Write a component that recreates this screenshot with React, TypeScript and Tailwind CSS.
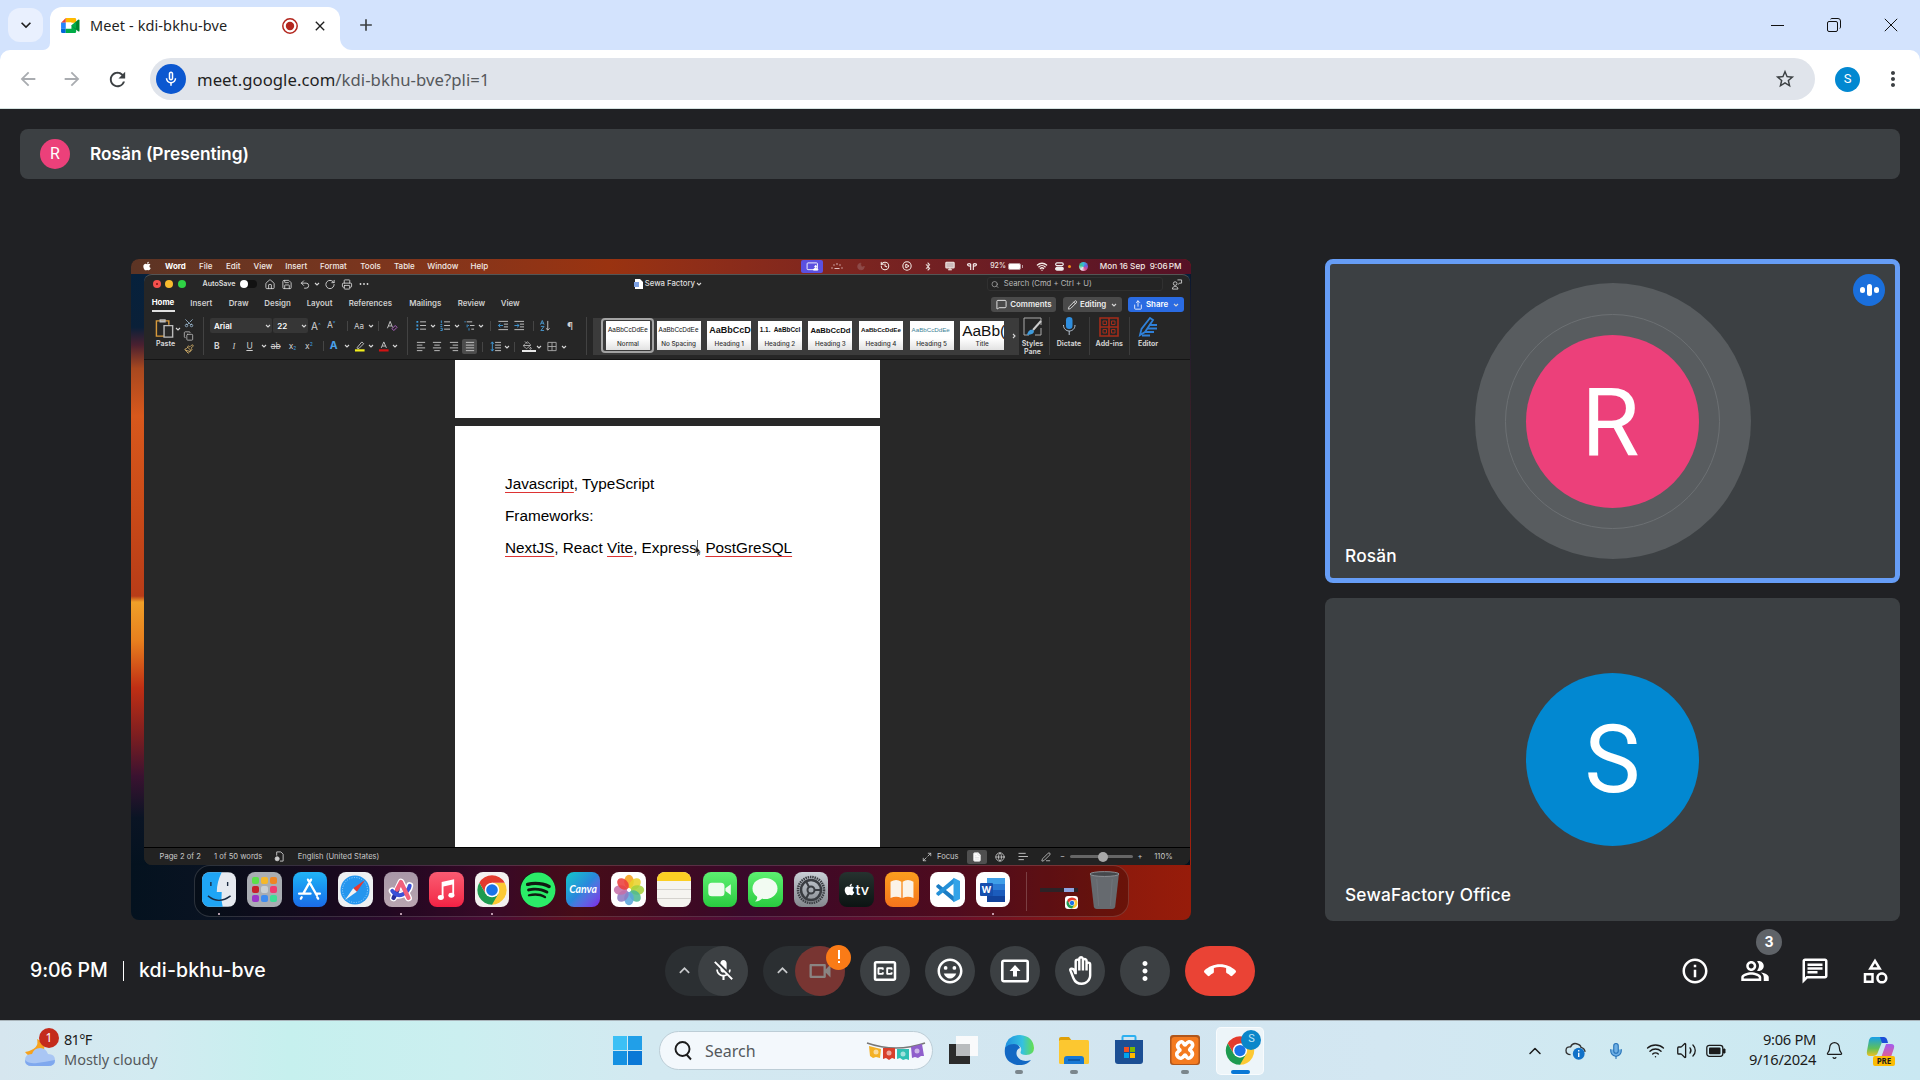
import React from "react";
import {
  MdMicOff, MdOutlineVideocam, MdOutlineClosedCaption, MdOutlineEmojiEmotions, MdOutlineMoreVert, MdCallEnd,
  MdOutlineInfo, MdOutlinePeopleAlt, MdOutlineChat, MdOutlineCategory, MdKeyboardArrowUp, MdOutlineBackHand,
  MdStarOutline, MdRefresh, MdArrowBack, MdArrowForward, MdClose, MdAdd, MdOutlineMicNone, MdKeyboardArrowDown, MdMoreVert,
} from "react-icons/md";
import { FaApple, FaSpotify, FaBluetoothB } from "react-icons/fa";
import {
  Home, Save, Undo2, RotateCw, Printer, Search, MessageSquare, Pencil, Share, Wifi, Scissors, Copy,
  Paintbrush, History, CirclePlay, Monitor, Moon, Globe, Maximize2, PenLine, Bell, Mic, ChevronUp,
  FileText, PaintBucket, Volume2,
} from "lucide-react";

const Caret = () => (
  <svg viewBox="0 0 6 6" className="h-[6px] w-[6px]" fill="none" stroke="#d6d6d6" strokeWidth="1.1"><path d="M1 2l2 2 2-2" /></svg>
);

/* ---------- Browser chrome ---------- */

const MeetLogo = () => (
  <svg viewBox="0 0 20 18" className="h-[17px] w-[19px]">
    <path d="M5 1H14.5Q16 1 16 2.500V6H11V5.500H5z" fill="#ffba00" />
    <path d="M0 6L5 1V6z" fill="#ea4335" />
    <path d="M0 6H5V12.500H0z" fill="#2684fc" />
    <path d="M0 12.500H5V17H1.500Q0 17 0 15.500z" fill="#0066da" />
    <path d="M5 12.500H11V9H16V15.500Q16 17 14.500 17H5z" fill="#00ac47" />
    <path d="M11 9L18 2.800Q19.500 2 19.500 3.500V14.500Q19.500 16 18 15.200L14 12z" fill="#00832d" />
    <path d="M11 9L16 5V12.700z" fill="#00ac47" />
  </svg>
);

function TabStrip() {
  return (
    <div className="flex h-[50px] items-start bg-[#d3e3fd] pl-2">
      <div className="mt-2 flex h-[34px] w-[35px] items-center justify-center rounded-xl bg-[#e9f0fe]">
        <MdKeyboardArrowDown className="h-5 w-5 text-[#1f1f1f]" />
      </div>
      <div className="flex h-[50px] w-[7px] items-end overflow-hidden bg-white">
        <div className="h-[50px] w-[7px] rounded-br-xl bg-[#d3e3fd]" />
      </div>
      <div className="h-[50px] w-[290px] bg-[#d3e3fd] pt-[7px]">
        <div className="grid h-[43px] w-[290px] grid-cols-[29px_192px_30px_auto] items-center rounded-t-xl bg-white pb-[6px] pl-[11px]">
          <MeetLogo />
          <span className="text-[14.5px] tracking-[0.1px] text-[#1f1f1f]">Meet - kdi-bkhu-bve</span>
          <svg viewBox="0 0 16 16" className="h-4 w-4"><circle cx="8" cy="8" r="7.200" fill="none" stroke="#b3261e" strokeWidth="1.500" /><circle cx="8" cy="8" r="4.200" fill="#b3261e" /></svg>
          <MdClose className="h-[16px] w-[16px] text-[#1f1f1f]" />
        </div>
      </div>
      <div className="flex h-[50px] w-[12px] items-end bg-white">
        <div className="h-[50px] w-[12px] rounded-bl-xl bg-[#d3e3fd]" />
      </div>
      <div className="flex h-[50px] w-[27px] items-center justify-center">
        <MdAdd className="h-5 w-5 text-[#3c4043]" />
      </div>
      <div className="ml-auto grid h-[49px] w-[149px] grid-cols-[56px_57px_auto] items-center">
        <svg viewBox="0 0 14 14" className="h-[14px] w-[14px]" stroke="#111"><path d="M0 7.500h13" /></svg>
        <svg viewBox="0 0 14 14" className="h-[14px] w-[14px]" fill="none" stroke="#111"><rect x="0.500" y="3.500" width="10" height="10" rx="1.500" /><path d="M3.500 1.200Q4 .5 5 .5h6Q13.500.5 13.500 3v6q0 1-.7 1.500" /></svg>
        <svg viewBox="0 0 14 14" className="h-[14px] w-[14px]" stroke="#111"><path d="M.8.8l12.400 12.400M13.200.8L.8 13.200" /></svg>
      </div>
    </div>
  );
}

function Toolbar() {
  return (
    <div className="h-[59px] bg-[#d3e3fd]">
      <div className="flex h-[59px] items-center rounded-t-[10px] border-b border-[#d5e2e0] bg-white pl-[17px]">
        <MdArrowBack className="mr-[22px] h-[22px] w-[22px] text-[#a9acb0]" />
        <MdArrowForward className="mr-[23px] h-[22px] w-[22px] text-[#a9acb0]" />
        <MdRefresh className="mr-[21px] h-[23px] w-[23px] text-[#3c4043]" />
        <div className="flex h-[42px] w-[1665px] items-center rounded-full bg-[#e0e4eb] pl-[6px]">
          <div className="mr-[11px] flex h-[30px] w-[30px] items-center justify-center rounded-full bg-[#0b57d0]">
            <MdOutlineMicNone className="h-[18px] w-[18px] text-white" />
          </div>
          <span className="pt-px text-[16.700px] tracking-[0.050px] text-[#1f1f1f]">meet.google.com<span className="text-[#55585c]">/kdi-bkhu-bve?pli=1</span></span>
          <MdStarOutline className="ml-auto mr-[19px] h-[22px] w-[22px] text-[#3c4043]" />
        </div>
        <div className="ml-5 flex h-[25px] w-[25px] items-center justify-center rounded-full bg-[#0288d1] font-[Roboto] text-[13px] text-white">S</div>
        <MdMoreVert className="ml-[21px] h-[24px] w-[24px] text-[#3c4043]" />
      </div>
    </div>
  );
}

/* ---------- Shared macOS screen ---------- */

function MacMenuBar() {
  return (
    <div className="grid h-[15px] shrink-0 grid-cols-[24px_34px_27px_27.6px_31.7px_34.7px_40.3px_33.7px_33.3px_43.3px_330.7px_29.7px_24.3px_23.7px_22px_21px_21.6px_22.700px_24px_18px_27.700px_19.300px_13px_11px_20.700px_auto] items-center whitespace-nowrap bg-linear-to-r from-[#5c3424] via-[#9a3310] via-45% to-[#551126] pb-[3px] pl-[10px] text-[8px] font-medium text-[#f2e9e4]">
      <FaApple className="h-[10px] w-[12px] text-white" />
      <span className="font-bold text-white">Word</span>
      <span>File</span><span>Edit</span><span>View</span><span>Insert</span><span>Format</span><span>Tools</span><span>Table</span><span>Window</span><span>Help</span>
      <span className="mt-px flex h-[13px] w-[22px] items-center justify-center rounded-[2px] bg-[#5b50e0]">
        <svg viewBox="0 0 14 10" className="h-[9px] w-[13px]" fill="none" stroke="#fff"><rect x="1" y="1" width="11.500" height="7.500" rx="1" /><path d="M8 9c0-3 5-3 5 0z" fill="#fff" /><circle cx="10.500" cy="5" r="1" fill="#fff" /></svg>
      </span>
      <svg viewBox="0 0 12 10" className="h-[10px] w-[12px]" fill="#e0bcc0"><circle cx="6" cy="3" r=".8" /><circle cx="3" cy="4" r=".7" /><circle cx="9" cy="4" r=".7" /><circle cx="1" cy="7" r=".7" /><circle cx="11" cy="7" r=".7" /><path d="M3.500 7h5v1h-5z" /></svg>
      <Moon className="h-[9px] w-[12px] fill-[#8e4a48] text-[#8e4a48]" />
      <History className="h-[10px] w-[12px]" strokeWidth={2.500} />
      <CirclePlay className="h-[10px] w-[12px]" strokeWidth={2.500} />
      <FaBluetoothB className="h-[9px] w-[12px]" />
      <Monitor className="h-[10px] w-[12px] fill-[#cbb]" strokeWidth={2.500} />
      <svg viewBox="0 0 12 10" className="h-[9px] w-[12px]" fill="none" stroke="#f0e4e4" strokeWidth="1.300"><path d="M4.500 9V2.500Q3 1 1 2.500q0 2 3 2M7.500 9V2.500Q9 1 11 2.500q0 2-3 2" /></svg>
      <span className="text-[7px]">92%</span>
      <span className="flex items-center gap-px"><span className="h-[7px] w-[13px] rounded-[2px] border border-[#b89a9e] bg-white" /><span className="h-[3px] w-px bg-[#b89a9e]" /></span>
      <Wifi className="h-[11px] w-[12px]" strokeWidth={3} />
      <svg viewBox="0 0 10 10" className="h-[9px] w-[9px]" fill="none" stroke="#eee" strokeWidth="1.300"><rect x=".7" y="1" width="8.500" height="3" rx="1.500" /><rect x=".7" y="6" width="8.500" height="3" rx="1.500" fill="#eee" /></svg>
      <span className="h-[3px] w-[3px] rounded-full bg-[#f0901e]" />
      <span className="h-[9px] w-[9px] rounded-full bg-[conic-gradient(#38b6d8,#6a5be0,#d84a8a,#e8e8f0,#3fc48e,#38b6d8)]" />
      <span className="text-[8.200px]">Mon 16 Sep&nbsp; 9:06<span className="ml-px">PM</span></span>
    </div>
  );
}

function WordTitle() {
  return (
    <div className="grid h-[19px] shrink-0 grid-cols-[12.700px_13px_24.300px_37.700px_24.300px_17px_17.700px_14.700px_10.300px_17px_17.300px_275.700px_11.700px_49.300px_291.700px_184.300px_auto] items-center whitespace-nowrap pb-px pl-[8.500px] text-[7.900px] text-[#dedede]">
      <span className="flex h-[8px] w-[8px] items-center justify-center rounded-full bg-[#f5504d]"><span className="h-[2px] w-[2px] rounded-full bg-[#7a1010]" /></span>
      <span className="h-[8px] w-[8px] rounded-full bg-[#f8bb2e]" />
      <span className="h-[8px] w-[8px] rounded-full bg-[#2fd245]" />
      <span className="text-[7.100px] font-semibold">AutoSave</span>
      <span className="flex h-[8px] w-[17px] items-center rounded-full bg-[#121212]"><span className="h-[8px] w-[8px] rounded-full bg-white" /></span>
      <Home className="h-[11px] w-[12px]" strokeWidth={1.800} />
      <Save className="h-[11px] w-[12px]" strokeWidth={1.800} />
      <Undo2 className="h-[11px] w-[12px]" strokeWidth={1.900} />
      <Caret />
      <RotateCw className="h-[11px] w-[12px]" strokeWidth={1.900} />
      <Printer className="h-[11px] w-[12px]" strokeWidth={1.800} />
      <svg viewBox="0 0 12 4" className="h-[4px] w-[12px]" fill="#ddd"><circle cx="2.500" cy="2" r=".9" /><circle cx="6" cy="2" r=".9" /><circle cx="9.500" cy="2" r=".9" /></svg>
      <svg viewBox="0 0 9 10" className="h-[10px] w-[9px]"><path d="M1 0h5l3 3v7H1z" fill="#fff" /><path d="M0 3h5v5H0z" fill="#7ea2e4" /></svg>
      <span className="-ml-px text-[7.800px] font-medium tracking-[-0.050px]">Sewa Factory</span>
      <span className="ml-px flex"><Caret /></span>
      <span className="flex h-[14px] w-[176px] items-center gap-[5px] rounded-[3px] border border-[#303030] bg-[#242424] pl-[3px] text-[7.700px] text-[#b8b8b8]"><Search className="h-[9px] w-[8px]" />Search (Cmd + Ctrl + U)</span>
      <svg viewBox="0 0 12 12" className="h-[11px] w-[12px]" fill="none" stroke="#ccc"><circle cx="4" cy="5" r="2" /><path d="M1 11c0-4 6-4 6 0zM6.500 1h4.500v3.500H8.500L7.500 6" /></svg>
    </div>
  );
}

function WordTabs() {
  return (
    <div className="grid h-[19px] shrink-0 grid-cols-[38.600px_38.400px_35.600px_42.400px_42px_60.600px_48.400px_43px_490.600px_71.700px_65px_56px] items-center whitespace-nowrap pl-[7.700px] text-[7.900px] font-semibold text-[#cfcfcf]">
      <span className="flex h-[17px] w-[23.500px] items-center border-b-2 border-[#e0e0e0] font-bold text-white">Home</span>
      <span>Insert</span><span>Draw</span><span>Design</span><span>Layout</span><span>References</span><span>Mailings</span><span>Review</span><span>View</span>
      <span className="mt-[2px] flex h-[15px] w-[65px] items-center gap-[3px] rounded-[3px] bg-[#4a4a4a] pl-[5px] text-[#eee]"><MessageSquare className="h-[11px] w-[11px]" />Comments</span>
      <span className="mt-[2px] flex h-[15px] w-[59px] items-center gap-[2px] rounded-[3px] bg-[#4a4a4a] pl-[4px] text-[#eee]"><Pencil className="h-[10px] w-[11px]" />Editing<span className="ml-[3px]"><Caret /></span></span>
      <span className="mt-[2px] flex h-[15px] w-[56px] items-center gap-[3px] rounded-[3px] bg-[#2a6be2] pl-[5px] text-white"><Share className="h-[10px] w-[10px]" />Share<span className="ml-[2px]"><Caret /></span></span>
    </div>
  );
}

const Rule = () => <span className="h-[10px] w-px bg-[#454545]" />;
const Divider = () => <span className="h-[38px] w-px shrink-0 bg-[#424242]" />;

const Lines = ({ kind }: { kind: "left" | "center" | "right" | "full" | "bullets" | "numbers" | "tree" | "spacing" | "outdent" | "indent" }) => {
  const s = { className: "h-[11px] w-[12px]", viewBox: "0 0 12 12", fill: "none" };
  const g = "#c9c9c9";
  const b = "#3f9bdc";
  if (kind === "left") return <svg {...s} stroke={g}><path d="M1.500 1.500h9M1.500 4.500h6M1.500 7.500h9M1.500 10.500h6" /></svg>;
  if (kind === "center") return <svg {...s} stroke={g}><path d="M1.500 1.500h9M3 4.500h6M1.500 7.500h9M3 10.500h6" /></svg>;
  if (kind === "right") return <svg {...s} stroke={g}><path d="M1.500 1.500h9M4.500 4.500h6M1.500 7.500h9M4.500 10.500h6" /></svg>;
  if (kind === "full") return <svg {...s} stroke={g}><path d="M1.500 1.500h9M1.500 4.500h9M1.500 7.500h9M1.500 10.500h9" /></svg>;
  if (kind === "bullets") return <svg {...s}><path d="M5 2h6.500M5 6h6.500M5 10h6.500" stroke={g} /><path d="M1 2h2M1 6h2M1 10h2" stroke={b} strokeWidth="2" /></svg>;
  if (kind === "numbers") return <svg {...s}><path d="M5 2h6.500M5 6h6.500M5 10h6.500" stroke={g} /><path d="M2 .5v3M1 5h2M1 7h2M1 9h2v2.500H1" stroke={b} /></svg>;
  if (kind === "tree") return <svg {...s}><path d="M3.500 2h6M7 6h5M8.500 10h3" stroke={g} /><path d="M1 2h1.500M4 5v3M5 6h1M6 9v2.500" stroke={b} /></svg>;
  if (kind === "spacing") return <svg {...s}><path d="M5 1.500h6.500M5 4.500h6.500M5 7.500h6.500M5 10.500h6.500" stroke={g} /><path d="M2 1v10M.5 3L2 1l1.500 2M.5 9L2 11l1.500-2" stroke={b} /></svg>;
  return <svg {...s}><path d="M1 1.500h10.500M7 4.500h4.500M7 7.500h4.500M1 10.500h10.500" stroke={g} />{kind === "outdent" ? <path d="M6 6H1M3 4L1 6l2 2" stroke={b} /> : <path d="M1 6h5M4 4l2 2-2 2" stroke={b} />}</svg>;
};

const styles = [
  { sample: "AaBbCcDdEe", name: "Normal", cls: "text-[6.400px] font-normal tracking-[0.050px]" },
  { sample: "AaBbCcDdEe", name: "No Spacing", cls: "text-[6.400px] font-normal tracking-[0.050px]" },
  { sample: "AaBbCcD", name: "Heading 1", cls: "text-[9px] font-bold" },
  { sample: "1.1.  AaBbCcl", name: "Heading 2", cls: "text-[6.400px] font-bold" },
  { sample: "AaBbCcDd", name: "Heading 3", cls: "text-[7.700px] font-bold" },
  { sample: "AaBbCcDdEe", name: "Heading 4", cls: "text-[6.200px] font-bold" },
  { sample: "AaBbCcDdEe", name: "Heading 5", cls: "text-[6.200px] text-[#3d8296]" },
  { sample: "AaBb(", name: "Title", cls: "text-[15.500px]" },
];

function Ribbon() {
  return (
    <div className="flex h-[47px] shrink-0 items-center border-b border-[#141414] text-[#d0d0d0]">
      <div className="flex w-[59px] pl-[11px]">
        <div className="w-[26px]">
          <div className="flex items-center">
            <svg viewBox="0 0 20 22" className="h-[21px] w-[20px]" fill="none" strokeWidth="1.500"><path d="M9 19H1V3h13v4" stroke="#d99a3b" /><path d="M5 4V2h5v2z" stroke="#bbb" /><path d="M9 8h9v12H9z" stroke="#bbb" fill="#282828" /></svg>
            <Caret />
          </div>
          <div className="pl-[1px] text-[7px] font-bold leading-[9px]">Paste</div>
        </div>
        <div className="flex flex-col items-center gap-[3px] pl-[2px]">
          <Scissors className="h-[10px] w-[10px] -rotate-90 text-[#9bb8cf]" />
          <Copy className="h-[10px] w-[11px] text-[#bbb]" />
          <Paintbrush className="h-[10px] w-[10px] text-[#e0ba70]" />
        </div>
      </div>
      <Divider />
      <div className="-mt-px flex w-[202.500px] flex-col gap-[6px]">
        <div className="grid h-[15px] grid-cols-[63.300px_37.700px_16px_19.700px_7.300px_14px_10px_8px_auto] items-center pl-[6px] text-[8px]">
          <span className="flex h-[15px] w-[62px] items-center justify-between rounded-[2px] bg-[#363636] pl-[4px] pr-px font-semibold text-white">Arial<Caret /></span>
          <span className="flex h-[15px] w-[35px] items-center justify-between rounded-[2px] bg-[#363636] pl-[4px] pr-px font-semibold text-white">22<Caret /></span>
          <span className="text-[10px] leading-none">A<sup className="text-[6px] text-[#3f9bdc]">^</sup></span>
          <span className="text-[8.500px] leading-none">A<sup className="text-[6px] text-[#3f9bdc]">˅</sup></span>
          <Rule />
          <span>Aa</span>
          <Caret />
          <Rule />
          <svg viewBox="0 0 12 12" className="h-[11px] w-[12px]" fill="none" stroke="#ccc"><path d="M1 9L4 1.500 6.500 8M2 6.500h3.500" /><path d="M6 9.500L9.500 6l2 2L8 11.500z" stroke="#b565c8" /></svg>
        </div>
        <div className="grid h-[14px] grid-cols-[16.400px_16px_15px_9.300px_18px_16.300px_17.700px_7px_14.300px_9.700px_14.300px_10px_14.400px_auto] items-center pl-[10px] text-[8.500px] leading-none">
          <span className="font-bold">B</span>
          <span className="font-[Liberation_Serif] italic">&nbsp;I</span>
          <span className="underline">U</span>
          <Caret />
          <span className="line-through">ab</span>
          <span>x<sub className="text-[5px] text-[#3f9bdc]">2</sub></span>
          <span>x<sup className="text-[5px] text-[#3f9bdc]">2</sup></span>
          <Rule />
          <span className="text-[10.500px] font-bold text-[#4aa0e8]">A</span>
          <Caret />
          <svg viewBox="0 0 12 12" className="h-[11px] w-[12px]"><path d="M3 7L8 1l2 2-5 5H3z" fill="none" stroke="#ccc" /><path d="M.5 9h10.500v2.500H.5z" fill="#f2ee1c" /></svg>
          <Caret />
          <svg viewBox="0 0 12 12" className="h-[11px] w-[12px]"><path d="M3 7.500L5.800 1l2.800 6.500M4 5.500h3.500" fill="none" stroke="#ccc" /><path d="M.5 9h10.500v2.500H.5z" fill="#d01313" /></svg>
          <Caret />
        </div>
      </div>
      <Divider />
      <div className="-mt-px flex w-[178px] flex-col gap-[6px]">
        <div className="grid h-[15px] grid-cols-[14.700px_9.300px_14.700px_9.600px_14.400px_12.300px_6.700px_16.300px_19.700px_6px_28.300px_auto] items-center pl-[7.500px]">
          <Lines kind="bullets" /><Caret /><Lines kind="numbers" /><Caret /><Lines kind="tree" /><Caret />
          <Rule />
          <Lines kind="outdent" /><Lines kind="indent" />
          <Rule />
          <svg viewBox="0 0 12 12" className="h-[11px] w-[12px]" fill="none"><path d="M1 5L3 .5 5 5M1.500 3.500h3M1.500 7h3.500L1.500 11.500H5" stroke="#4c9bd2" /><path d="M9 1v10M7 9l2 2 2-2" stroke="#ccc" /></svg>
          <span className="text-[10px] leading-none">¶</span>
        </div>
        <div className="grid h-[14px] grid-cols-[16.300px_16.400px_14.600px_20px_7.400px_14px_10.700px_8px_14px_9.700px_14.600px_auto] items-center pl-[7.500px]">
          <Lines kind="left" /><Lines kind="center" /><Lines kind="right" />
          <span className="flex h-[15px] w-[15px] items-center justify-center rounded-[2px] bg-[#4c4c4c]"><Lines kind="full" /></span>
          <Rule />
          <Lines kind="spacing" /><Caret />
          <Rule />
          <span className="border-b-2 border-[#e8e8e8]"><PaintBucket className="h-[9px] w-[11px]" /></span>
          <Caret />
          <svg viewBox="0 0 12 12" className="h-[11px] w-[12px]" fill="none" stroke="#aaa"><path d="M1.500 1.500h9v9h-9zM6 1.500v9M1.500 6h9" /></svg>
          <Caret />
        </div>
      </div>
      <Divider />
      <div className="ml-[6px] flex h-[37px] w-[426px] shrink-0 items-center bg-[#3b3b3b] pb-px pl-[10.500px]">
        {styles.map((s, i) => (
          <div key={s.name} className="flex w-[50.600px] shrink-0">
            <div className={i === 0 ? "rounded-[2px] p-px ring-2 ring-[#a3a3a3]" : "p-px"}>
              <div className="ml-[2px] mr-px flex h-[29px] w-[44px] flex-col overflow-hidden bg-linear-to-b from-white from-60% to-[#e2e2e2] text-[#111]">
                <div className="flex h-[19px] items-center overflow-hidden pl-[2px]">
                  <span className={"whitespace-pre font-[Liberation_Sans] leading-none " + s.cls}>{s.sample}</span>
                </div>
                <div className="text-center text-[6.300px] font-medium leading-[9px] text-[#333]">{s.name}</div>
              </div>
            </div>
          </div>
        ))}
        <span className="ml-[3px] -rotate-90"><Caret /></span>
      </div>
      <div className="flex h-[38px] flex-1 text-center text-[7px] font-bold leading-[8px]">
        <div className="flex w-[28px] flex-col items-center gap-[3px]">
          <svg viewBox="0 0 20 20" className="h-[20px] w-[20px] shrink-0" fill="none"><path d="M18 8V1H1v17h5" stroke="#aaa" /><path d="M18 4L10 13" stroke="#ccc" strokeWidth="2" /><path d="M4 18c1-5 4-6 6-5s1 5-6 5z" fill="#3f9bdc" /><path d="M18 11v7h-6" stroke="#aaa" /></svg>
          <span>Styles<br />Pane</span>
        </div>
        <span className="ml-[2px] w-px bg-[#3c3c3c]" />
        <div className="flex w-[39px] flex-col items-center gap-[3px]">
          <svg viewBox="0 0 14 20" className="h-[20px] w-[14px] shrink-0" fill="none"><rect x="4" y="0" width="6.500" height="12" rx="3.200" fill="#2f8fe0" /><path d="M1.500 8c0 8 11.500 8 11.500 0M7.200 14v4" stroke="#b9c6d4" /></svg>
          <span>Dictate</span>
        </div>
        <span className="w-px bg-[#3c3c3c]" />
        <div className="flex w-[39.500px] flex-col items-center gap-[3px]">
          <svg viewBox="0 0 20 20" className="h-[20px] w-[20px] shrink-0" fill="none" stroke="#a52c1a"><path d="M1 1h18v18H1zM10 1v18M1 10h18" strokeWidth="1.600" /><path d="M4 4h3.500v3.500H4zM12.500 4H16v3.500h-3.500zM4 12.500h3.500V16H4zM12.500 12.500H16V16h-3.500z" /></svg>
          <span>Add-ins</span>
        </div>
        <span className="w-px bg-[#3c3c3c]" />
        <div className="flex w-[36px] flex-col items-center gap-[3px]">
          <svg viewBox="0 0 20 20" className="h-[20px] w-[20px] shrink-0" fill="none"><path d="M2 18l1.500-6L12 1l3 2L7 15z" stroke="#2f80d8" strokeWidth="1.800" /><path d="M11 8h8M9 11.500h10M7 15h9M4 18.500h8" stroke="#2f80d8" strokeWidth="2" /></svg>
          <span>Editor</span>
        </div>
      </div>
    </div>
  );
}

const Sp = ({ children }: { children: React.ReactNode }) => (
  <span className="underline decoration-[#d33] decoration-1 underline-offset-[3px]">{children}</span>
);

function DocArea() {
  return (
    <div className="flex min-h-0 flex-1 flex-col items-start bg-[#282828] pl-[311px]">
      <div className="h-[58px] w-[425px] bg-white" />
      <div className="mt-[8px] flex w-[425px] flex-1 flex-col bg-white pl-[50px] pt-[42px] font-[Liberation_Sans] text-[15.300px] leading-[32px] text-black">
        <p><Sp>Javascript</Sp>, TypeScript</p>
        <p>Frameworks:</p>
        <p className="flex whitespace-pre">
          <span><Sp>NextJS</Sp>, React <Sp>Vite</Sp>, Express</span>
          <span className="relative my-[8px] w-px bg-black/60">
            <svg viewBox="0 0 8 12" className="absolute -left-[2px] top-[6px] h-[9px] w-[6px]"><path d="M1 0v10l2.200-2 1.500 3.500 1.500-.7L4.700 7.500H7.500z" fill="#111" stroke="#fff" strokeWidth=".6" /></svg>
          </span>
          <span className="-ml-px">, <Sp>PostGreSQL</Sp></span>
        </p>
      </div>
    </div>
  );
}

function StatusBar() {
  return (
    <div className="grid h-[18px] shrink-0 grid-cols-[54.400px_59px_24.700px_624.300px_15px_30px_27px_22.600px_23.400px_20px_9.500px_68px_16.800px_auto] items-center whitespace-nowrap border-t border-black bg-[#222] pl-[15.600px] text-[7.600px] text-[#c8c8c8]">
      <span>Page 2 of 2</span>
      <span>1 of 50 words</span>
      <svg viewBox="0 0 12 12" className="h-[11px] w-[12px]" fill="none" stroke="#ccc"><path d="M3.500 5V1h4.500l2.500 2.500V11H7" /><circle cx="4" cy="8.500" r="2.200" fill="#ccc" /></svg>
      <span>English (United States)</span>
      <Maximize2 className="h-[10px] w-[10px]" />
      <span>Focus</span>
      <span className="flex h-[14px] w-[20px] items-center justify-center rounded-[2px] bg-[#4f4f4f]"><FileText className="h-[10px] w-[10px] fill-white text-[#ddd]" /></span>
      <Globe className="h-[10px] w-[12px]" />
      <svg viewBox="0 0 12 10" className="h-[9px] w-[12px]" stroke="#ccc"><path d="M1 1.500h8M1 5h10.500M1 8.500h6" /></svg>
      <PenLine className="h-[10px] w-[12px]" />
      <span>−</span>
      <span className="ml-px flex h-[3px] w-[63px] items-center rounded-full bg-[#666]"><span className="ml-[28px] h-[10px] w-[10px] rounded-full bg-[#a8a8a8]" /></span>
      <span>+</span>
      <span>110%</span>
    </div>
  );
}

/* ---------- Dock ---------- */

const ChromeLogo = ({ className }: { className: string }) => (
  <svg viewBox="0 0 48 48" className={className}>
    <circle cx="24" cy="24" r="22" fill="#fff" />
    <path d="M24 24L43.050 13A22 22 0 0 1 24 46z" fill="#fcc934" />
    <path d="M24 13H43.050L33.500 29.500z" fill="#fcc934" />
    <path d="M24 13H43.050A22 22 0 0 0 4.950 13L14.500 29.500z" fill="#e33b2e" />
    <path d="M33.500 29.500L24 46A22 22 0 0 1 4.950 13L14.500 29.500z" fill="#1e9b50" />
    <circle cx="24" cy="24" r="11" fill="#fff" />
    <circle cx="24" cy="24" r="8.700" fill="#1a73e8" />
  </svg>
);

const tile = "flex h-[35px] w-[34.500px] items-center justify-center overflow-hidden rounded-[8px] ";

const DockItem = ({ children, running }: { children: React.ReactNode; running?: boolean }) => (
  <div className="flex w-[45.550px] shrink-0 flex-col items-start">
    {children}
    <div className="mt-[6px] flex w-[34.500px] justify-center">{running ? <span className="h-[2px] w-[2px] rounded-full bg-[#e8c8d8]" /> : null}</div>
  </div>
);

const launch = ["bg-[#5be04a]", "bg-[#f5b82a]", "bg-[#ee8424]", "bg-[#c8202c]", "bg-[#c9cfd2]", "bg-[#f03a72]", "bg-[#9a35c8]", "bg-[#3f8cf0]", "bg-[#3fdc96]"];
const petals = ["#f7a01c", "#e8d32b", "#a5d13c", "#4db892", "#5aa5dc", "#8d7cc4", "#c56fa8", "#ec3f3c"];

function Dock() {
  return (
    <div className="ml-[63px] flex h-[52px] w-[935px] rounded-[16px] border border-white/15 bg-black/25 pl-[6.500px] pt-[6px]">
      <DockItem running>
        <svg viewBox="0 0 35 35" className={tile}><path d="M0 0h35v35H0z" fill="#e6eaf0" /><path d="M0 0h20Q15 10 15 20h5q-1 8 1 15H0z" fill="#1fa5f5" /><path d="M9 10v4M26 10v4M6 24q11 9 23 0" stroke="#1b2a40" strokeWidth="1.400" fill="none" /></svg>
      </DockItem>
      <DockItem>
        <div className={tile + "bg-[#a9adb3]"}><div className="grid grid-cols-3 gap-[2px]">{launch.map((c) => <span key={c} className={"h-[7px] w-[7px] rounded-[2px] " + c} />)}</div></div>
      </DockItem>
      <DockItem>
        <div className={tile + "bg-linear-to-b from-[#22b4f6] to-[#1c6be8]"}><svg viewBox="0 0 24 24" className="h-[25px] w-[25px]" stroke="#fff" strokeWidth="2.200" strokeLinecap="round" fill="none"><path d="M13.500 2.500L6 16M10.500 2.500L19 17.500M2 16h11M18 16h4M4.500 19.500l-.8 1.300M19.500 19.500l.8 1.300" /></svg></div>
      </DockItem>
      <DockItem>
        <div className={tile + "bg-[#eef0f2]"}><svg viewBox="0 0 32 32" className="h-[32px] w-[32px]"><circle cx="16" cy="16" r="14.500" fill="#2496ee" /><circle cx="16" cy="16" r="12.500" fill="none" stroke="#9bd0fa" strokeDasharray="1 1.500" /><path d="M26 6L17.800 17.800 14.200 14.200z" fill="#e8392f" /><path d="M6 26L14.200 14.200 17.800 17.800z" fill="#f2f2f2" /></svg></div>
      </DockItem>
      <DockItem running>
        <div className={tile + "bg-linear-to-b from-[#a898a8] to-[#b9a5b0]"}><svg viewBox="0 0 32 32" className="h-[28px] w-[28px]" fill="none" strokeLinecap="round" strokeLinejoin="round"><path d="M6 17q5 7 12 4 7-4 8-10M7.500 25L16 7l8.500 18" stroke="#fff" strokeWidth="8" /><path d="M7.500 25L12 16" stroke="#27309c" strokeWidth="5" /><path d="M6 17q5 7 12 4 7-4 8-10" stroke="#3a50d8" strokeWidth="4.500" /><path d="M11.500 15.500L16 7l8.500 18" stroke="#f0607c" strokeWidth="5" /></svg></div>
      </DockItem>
      <DockItem>
        <div className={tile + "bg-linear-to-b from-[#fa5a72] to-[#f21f44]"}><svg viewBox="0 0 24 24" className="h-[26px] w-[26px]" fill="#fff"><path d="M8 4.500L19.500 2v14.500h-1.700V7L9.700 8.800V19H8z" /><ellipse cx="7.200" cy="19" rx="2.800" ry="2.300" /><ellipse cx="17" cy="16.800" rx="2.800" ry="2.300" /></svg></div>
      </DockItem>
      <DockItem running><div className={tile + "bg-[#f3f1f0]"}><ChromeLogo className="h-[32px] w-[32px]" /></div></DockItem>
      <DockItem><div className="flex h-[35px] w-[35px] items-center justify-center rounded-full bg-[#101a12]"><FaSpotify className="h-[36px] w-[36px] shrink-0 text-[#2bec68]" /></div></DockItem>
      <DockItem><div className={tile + "bg-linear-to-br from-[#14c8c8] via-[#2a86dc] to-[#7a18e8] font-[Lato] text-[10.500px] font-bold italic text-white"}>Canva</div></DockItem>
      <DockItem>
        <div className={tile + "bg-white"}><svg viewBox="-16 -16 32 32" className="h-[32px] w-[32px]">{petals.map((p, i) => <ellipse key={p} cx="0" cy="-8.500" rx="4.800" ry="6.700" fill={p} opacity=".88" transform={`rotate(${i * 45})`} />)}</svg></div>
      </DockItem>
      <DockItem><div className={tile + "flex-col bg-[#f5f4f0]"}><span className="h-[9px] w-full shrink-0 bg-[#fccf24]" /><span className="mt-[8px] h-px w-full bg-[#d5d3ce]" /><span className="mt-[8px] h-px w-full bg-[#d5d3ce]" /><span className="flex-1" /></div></DockItem>
      <DockItem><div className={tile + "bg-linear-to-b from-[#5cf070] to-[#28cc40]"}><svg viewBox="0 0 28 20" className="h-[18px] w-[26px]" fill="#eefbee"><rect x="1" y="2" width="18" height="15" rx="4" /><path d="M20 8l6-4.500v12L20 11z" /></svg></div></DockItem>
      <DockItem><div className={tile + "bg-linear-to-b from-[#5cf070] to-[#28cc40]"}><svg viewBox="0 0 28 26" className="h-[26px] w-[28px]" fill="#f2fbf2"><ellipse cx="14" cy="11.500" rx="12.500" ry="10.500" /><path d="M6 18q1 4-2 6.500 5 0 8-4z" /></svg></div></DockItem>
      <DockItem>
        <div className={tile + "bg-linear-to-b from-[#c9cfd6] to-[#84888e]"}><svg viewBox="-16 -16 32 32" className="h-[32px] w-[32px]" fill="none" stroke="#3a3d42"><circle r="13" strokeWidth="2.500" strokeDasharray="1.500 .8" /><circle r="10" strokeWidth="2.500" /><circle r="3.500" strokeWidth="2" /><path d="M3.500 0H10M-2 3L-5 8.700M-2-3L-5-8.700" strokeWidth="2" /></svg></div>
      </DockItem>
      <DockItem><div className={tile + "gap-px bg-linear-to-b from-[#26322f] to-[#0c1413] text-[14.500px] font-medium text-white"}><FaApple className="h-[13px] w-[11px]" />tv</div></DockItem>
      <DockItem><div className={tile + "bg-linear-to-b from-[#fb9e1e] to-[#f5741c]"}><svg viewBox="0 0 26 22" className="h-[21px] w-[26px]" fill="#fbf3e8"><path d="M1 3Q7-1 12.300 3v17Q7 17 1 20zM25 3Q19-1 13.700 3v17Q19 17 25 20z" /></svg></div></DockItem>
      <DockItem><div className={tile + "bg-white"}><svg viewBox="0 0 26 26" className="h-[26px] w-[26px]"><path d="M1.500 8.500L3.500 7 19 19.500V25L1.200 10z" fill="#1b7cc4" /><path d="M1.500 17.500L3.500 19 19 6.500V1L1.200 16z" fill="#2490d8" /><path d="M18.500.8L25 4v18l-6.500 3.200z" fill="#33a3e8" /></svg></div></DockItem>
      <DockItem running>
        <div className={tile + "bg-white"}><svg viewBox="0 0 28 26" className="h-[26px] w-[28px]"><path d="M8 1h18v6H8z" fill="#3f9fe8" /><path d="M8 7h18v6H8z" fill="#2a7ad4" /><path d="M8 13h18v6H8z" fill="#1c5cbc" /><path d="M8 19h18v6H8z" fill="#12439c" /><rect x="1" y="6" width="13" height="13" rx="1" fill="#164fae" /><text x="7.500" y="16" textAnchor="middle" fontSize="9.500" fontWeight="700" fontFamily="Inter" fill="#fff">W</text></svg></div>
      </DockItem>
      <span className="ml-[5px] h-[39px] w-px bg-white/20" />
      <div className="ml-[13px] flex w-[38px] flex-col items-end pt-[16px]">
        <div className="flex h-[4px] w-[38px] justify-end bg-[#2c2226]"><span className="mr-[4px] w-[10px] bg-[#8fa4e0]" /></div>
        <div className="mt-[4px] flex h-[13px] w-[13px] items-center justify-center rounded-[3px] bg-white"><ChromeLogo className="h-[12px] w-[12px]" /></div>
      </div>
      <svg viewBox="0 0 32 40" className="ml-[11px] -mt-px h-[39px] w-[31px]"><path d="M1 2h30L27 37q-.5 2-3 2H8q-2.500 0-3-2z" fill="#666a6f" /><ellipse cx="16" cy="3" rx="15" ry="2.500" fill="#45484c" stroke="#8d9196" /><path d="M8 8l2 28M24 8l-2 28" stroke="#70747a" /></svg>
    </div>
  );
}

function SharedScreen() {
  return (
    <div className="flex h-[661px] w-[1060px] flex-col overflow-hidden rounded-[8px] bg-[linear-gradient(90deg,#04121f_0%,#0a1322_8%,#2c0a2c_24%,#4a0c34_34%,#5e1020_42%,#4d0c38_58%,#6a0f28_78%,#8e1a0c_94%,#971c0a_100%)]">
      <MacMenuBar />
      <div className="flex h-[591px] shrink-0 bg-[linear-gradient(180deg,#06213c_0%,#0a2038_9%,#4a2030_12%,#a8481f_16%,#d8581c_24%,#c94a18_40%,#b83c18_54.500%,#f0a028_55.500%,#e8801e_62%,#c02f14_70%,#7e1e20_78%,#3a1230_85%,#0a1424_92%,#04121f_100%)]">
        <div className="ml-[13px] flex h-[591px] w-[1045.500px] flex-col overflow-hidden rounded-[8px] border-t border-[#555] bg-[#262626]">
          <WordTitle />
          <WordTabs />
          <Ribbon />
          <DocArea />
          <StatusBar />
        </div>
        <div className="flex-1 bg-linear-to-b from-[#0a1830] via-[#6a1a14] to-[#a3200c]" />
      </div>
      <Dock />
    </div>
  );
}

/* ---------- Meet ---------- */

const PresentIcon = () => (
  <svg viewBox="0 0 30 26" className="h-[26px] w-[30px]"><rect x="2.300" y="2.800" width="25.400" height="20.400" rx="1.500" fill="none" stroke="#fff" strokeWidth="2.600" /><path d="M15 7l5.500 6h-3.500v5.500h-4V13H9.500z" fill="#fff" /></svg>
);

const Round = ({ children }: { children: React.ReactNode }) => (
  <div className="mr-[15px] flex h-[50px] w-[50px] items-center justify-center rounded-full bg-[#3c4043] text-white">{children}</div>
);

function MeetControls() {
  return (
    <div className="flex h-[99px] items-center pl-[30px] text-white">
      <div className="flex w-[634.500px] items-center text-[19.500px] font-medium">
        <span className="w-[93px] tracking-[-0.150px]">9:06 PM</span>
        <span className="mr-[15px] h-[20px] w-px bg-white" />
        <span className="tracking-[0.150px]">kdi-bkhu-bve</span>
      </div>
      <div className="mr-[14.500px] flex h-[50px] w-[83.500px] items-center justify-between rounded-full bg-[#2b2f32]">
        <MdKeyboardArrowUp className="ml-[9px] h-[21px] w-[21px] text-[#c8cacc]" />
        <div className="flex h-[50px] w-[50px] items-center justify-center rounded-full bg-[#3c4043]"><MdMicOff className="h-[25px] w-[25px]" /></div>
      </div>
      <div className="relative mr-[15px] flex h-[50px] w-[82.500px] items-center justify-between rounded-full bg-[#2b2f32]">
        <MdKeyboardArrowUp className="ml-[9px] h-[21px] w-[21px] text-[#c8cacc]" />
        <div className="flex h-[50px] w-[50px] items-center justify-center rounded-full bg-[#783532]"><MdOutlineVideocam className="h-[28px] w-[28px] text-[#8a8482]" /></div>
        <span className="absolute -right-[6px] -top-px flex h-[25px] w-[25px] items-center justify-center rounded-full bg-[#fa7b17]"><svg viewBox="0 0 4 14" className="h-[14px] w-[4px]" fill="#fff"><path d="M1 0h2v9H1zM1 11h2v2H1z" /></svg></span>
      </div>
      <Round><MdOutlineClosedCaption className="h-[30px] w-[30px]" /></Round>
      <Round><MdOutlineEmojiEmotions className="h-[30px] w-[30px]" /></Round>
      <Round><PresentIcon /></Round>
      <Round><MdOutlineBackHand className="h-[29px] w-[29px]" /></Round>
      <Round><MdOutlineMoreVert className="h-[30px] w-[30px]" /></Round>
      <div className="flex h-[50px] w-[70px] items-center justify-center rounded-[25px] bg-[#ea4335]"><MdCallEnd className="h-[32px] w-[32px]" /></div>
      <div className="ml-auto flex items-center gap-[30px] pr-[30px]">
        <MdOutlineInfo className="h-[30px] w-[30px]" />
        <div className="relative"><MdOutlinePeopleAlt className="h-[30px] w-[30px]" /><span className="absolute -top-[27px] left-[16px] flex h-[26px] w-[26px] items-center justify-center rounded-full bg-[#5f6368] text-[14px] font-bold">3</span></div>
        <MdOutlineChat className="h-[30px] w-[30px]" />
        <MdOutlineCategory className="h-[30px] w-[30px]" />
      </div>
    </div>
  );
}

function Meet() {
  return (
    <div className="flex h-[911px] flex-col bg-[#202124] pt-5 font-[Inter,sans-serif]">
      <div className="mx-5 flex h-[50px] items-center rounded-[8px] bg-[#3c4043] pl-5 text-white">
        <div className="mr-5 flex h-[30px] w-[30px] items-center justify-center rounded-full bg-[#ec407a] font-[Roboto] text-[16px]">R</div>
        <span className="text-[17.300px] font-semibold">Rosän (Presenting)</span>
      </div>
      <div className="mt-[80px] flex h-[662px] justify-between pl-[131px] pr-5">
        <SharedScreen />
        <div className="flex w-[575px] flex-col gap-[15px] text-[17.300px] font-medium tracking-[0.200px] text-white">
          <div className="relative flex h-[324px] items-center justify-center rounded-[8px] border-[5px] border-[#669df6] bg-[#3c4043]">
            <div className="flex h-[276px] w-[276px] items-center justify-center rounded-full bg-[#585c5f]">
              <div className="flex h-[215px] w-[215px] items-center justify-center rounded-full border border-[#6c7073]">
                <div className="flex h-[173px] w-[173px] items-center justify-center rounded-full bg-[#ec407a] pr-[4px] pt-[3px] font-[Roboto] text-[94px] font-normal leading-none">R</div>
              </div>
            </div>
            <span className="absolute right-[10px] top-[10px] flex h-[32px] w-[32px] items-center justify-center gap-[2px] rounded-full bg-[#1a6fdc]"><span className="h-[6px] w-[5px] rounded-full bg-white" /><span className="h-[12px] w-[5px] rounded-full bg-white" /><span className="h-[6px] w-[5px] rounded-full bg-white" /></span>
            <span className="absolute bottom-[9px] left-[15px]">Rosän</span>
          </div>
          <div className="relative flex h-[323px] items-center justify-center rounded-[8px] bg-[#3c4043]">
            <div className="flex h-[173px] w-[173px] items-center justify-center rounded-full bg-[#0288d1] pt-px font-[Roboto] text-[94px] font-normal leading-none">S</div>
            <span className="absolute bottom-[13px] left-[20px]">SewaFactory Office</span>
          </div>
        </div>
      </div>
      <MeetControls />
    </div>
  );
}

/* ---------- Windows taskbar ---------- */

const TaskApp = ({ children, running }: { children: React.ReactNode; running?: boolean }) => (
  <div className="flex h-[60px] w-[55.400px] flex-col items-center pt-[14px]">
    {children}
    <span className={running ? "mt-[5px] h-[4px] w-[8px] rounded-full bg-[#7b868c]" : "hidden"} />
  </div>
);

function Taskbar() {
  return (
    <div className="flex h-[60px] items-center border-t border-[#a9b4ba] bg-[linear-gradient(90deg,#d6e6ef_0%,#d2ebf1_8%,#c6f0ee_15%,#cbeff0_24%,#d3e9f1_34%,#d2e5f0_60%,#d3e7f2_72%,#cfeaf1_86%,#c9e8f2_100%)] text-[#1b1b1b]">
      <div className="flex w-[599px] items-center pl-[24px]">
        <div className="relative mr-[8px] h-[36px] w-[32px]">
          <svg viewBox="0 0 32 36" className="h-[36px] w-[32px]"><path d="M13 6Q16 16 1 19q6 8 14 4t4-14z" fill="#f6a21e" /><path d="M8 33q-7 0-7-6t7-6q2-6 8-6t8 6q7 0 7 6t-7 6z" fill="#a9c6f4" /><path d="M8 33q-7 0-7-6 4 4 12 3t18-3q0 6-7 6z" fill="#7fa8ee" /></svg>
          <span className="absolute -top-[5px] left-[15px] flex h-[20px] w-[20px] items-center justify-center rounded-full bg-[#c42b1c] text-[12px] text-white">1</span>
        </div>
        <div className="mb-[3px] text-[14.500px] leading-[20px]"><div className="tracking-[-0.700px]">81°F</div><div className="text-[#55595c]">Mostly cloudy</div></div>
      </div>
      <div className="flex w-[60px] pl-[14px]">
        <div className="grid grid-cols-2 gap-px"><span className="h-[14px] w-[14px] bg-[#3cc0f5]" /><span className="h-[14px] w-[14px] bg-[#219fe8]" /><span className="h-[14px] w-[14px] bg-[#1591e2]" /><span className="h-[14px] w-[14px] bg-[#0a78d6]" /></div>
      </div>
      <div className="flex h-[39px] w-[274px] items-center rounded-full border border-[#bccdd6] bg-[#f3f8fc] pl-[13px]">
        <svg viewBox="0 0 20 20" className="h-[20px] w-[20px]" fill="none" stroke="#1b1b1b" strokeWidth="1.900"><circle cx="9.500" cy="8" r="7" /><path d="M13.500 13.500l4.500 5" /></svg>
        <span className="ml-[12px] pt-px text-[16px] text-[#55595c]">Search</span>
        <svg viewBox="0 0 60 20" className="ml-auto mr-[6px] h-[20px] w-[60px]"><path d="M1 2q29 10 58 0" fill="none" stroke="#777" strokeWidth="1.500" /><path d="M3 5l12 3-1 9-4-1-3 1-3-2z" fill="#f4b125" /><path d="M17 7h12v11l-3-1-3 2-3-2-3 1z" fill="#d8402c" /><path d="M31 8h12v11l-3-1-3 1-3-2-3 1z" fill="#2fc0b4" /><path d="M45 6l11-3 2 12-3 0-3 2-3-1-3 1z" fill="#8f5fcc" /><g fill="#fff" opacity=".55"><circle cx="10" cy="11" r="2.500" /><circle cx="23" cy="12" r="2.500" /><circle cx="37" cy="13" r="2.500" /><circle cx="51" cy="10" r="2.500" /></g></svg>
      </div>
      <div className="ml-[2.500px] flex">
        <TaskApp><svg viewBox="0 0 30 30" className="h-[30px] w-[30px]"><path d="M1 9h21v20H1z" fill="#2b2b2b" /><path d="M8 1h22v20H8z" fill="#fbfbfb" opacity=".95" /><path d="M8 9h14v12H8z" fill="#b9bcbe" /></svg></TaskApp>
        <TaskApp running>
          <svg viewBox="0 0 30 30" className="h-[30px] w-[30px]"><defs><linearGradient id="eg" x1="0" x2="1"><stop offset="0" stopColor="#1f8fe0" /><stop offset=".6" stopColor="#35c1e0" /><stop offset="1" stopColor="#66e04a" /></linearGradient></defs><path d="M1 13Q3 0 16 0q13 1 14 13 0 7-8 7-7 0-5-4 1-4-3-6Q6 8 1 15z" fill="url(#eg)" /><path d="M1 13q3-4 9-4 5 0 6 4-5 2-3 8 4 7 14 4-5 6-14 5Q-1 27 1 13z" fill="#1268c4" /></svg>
        </TaskApp>
        <TaskApp running><svg viewBox="0 0 30 30" className="h-[30px] w-[30px]"><path d="M0 4q0-2 2-2h8l3 4H0z" fill="#e0a008" /><rect y="5" width="30" height="24" rx="1.500" fill="#fcc730" /><path d="M5 29v-5q0-3 3-3h14q3 0 3 3v5z" fill="#1778d4" /><path d="M9 25h12" stroke="#0a4f9a" strokeWidth="1.500" /></svg></TaskApp>
        <TaskApp><svg viewBox="0 0 30 30" className="h-[30px] w-[30px]"><path d="M8.500 6V2q0-1 1-1h11q1 0 1 1v4" fill="none" stroke="#2cb0f0" strokeWidth="2" /><path d="M1 5h28v21q0 3-3 3H4q-3 0-3-3z" fill="#1c4f94" /><path d="M10 12h5v5h-5z" fill="#f25022" /><path d="M16 12h5v5h-5z" fill="#7fba00" /><path d="M10 18h5v5h-5z" fill="#00a4ef" /><path d="M16 18h5v5h-5z" fill="#ffb900" /></svg></TaskApp>
        <TaskApp running><svg viewBox="0 0 30 30" className="h-[30px] w-[30px]"><rect width="30" height="30" rx="3" fill="#b0571c" /><rect x="1.500" y="2" width="27" height="27" rx="3" fill="#f47b20" /><path d="M9 8q3-3 5 1 1 2 2 0 3-4 6-1 2 3-2 6-1 1 1 2 3 3 0 6t-5-1q-1-2-2 0-3 4-6 1t1-6q2-1 0-2-3-3 0-6z" fill="none" stroke="#fff" strokeWidth="3.600" /></svg></TaskApp>
        <div className="relative ml-[4px] mt-[6px] flex h-[48px] w-[48px] flex-col items-center rounded-[5px] border border-white/60 bg-white/60 pt-[7px]">
          <ChromeLogo className="h-[32px] w-[32px]" />
          <span className="mt-[4px] h-[4px] w-[19px] rounded-full bg-[#0a78d6]" />
          <span className="absolute right-[2px] top-[2px] flex h-[20px] w-[20px] items-center justify-center rounded-full bg-[#0b86ca] font-[Roboto] text-[11px] text-[#bfe3f5]">S</span>
        </div>
      </div>
      <div className="ml-auto flex items-center">
        <ChevronUp className="mr-[20px] h-[20px] w-[20px]" strokeWidth={1.800} />
        <svg viewBox="0 0 24 22" className="mr-[20px] h-[20px] w-[22px]"><path d="M6 15q-5 0-5-4.500T6 6.500Q8 2 12.500 3t5 4q4 1 4.500 5" fill="none" stroke="#333" strokeWidth="1.500" /><circle cx="15" cy="14" r="6.500" fill="#1272c8" /><path d="M15 13v4.500M15 10v1.500" stroke="#fff" strokeWidth="1.500" /></svg>
        <Mic className="mr-[21px] h-[20px] w-[18px] fill-[#6fb0e4] text-[#2672b8]" strokeWidth={1.500} />
        <Wifi className="mr-[11px] h-[19px] w-[19px]" strokeWidth={1.800} />
        <Volume2 className="mr-[9px] h-[21px] w-[21px]" strokeWidth={1.500} />
        <svg viewBox="0 0 20 14" className="h-[14px] w-[20px]"><rect x=".8" y="1.300" width="16" height="11" rx="2.500" fill="none" stroke="#1b1b1b" strokeWidth="1.300" /><rect x="3" y="3.500" width="11.500" height="6.700" rx="1" fill="#1b1b1b" /><path d="M17.500 5h1.500v4h-1.500z" fill="#1b1b1b" stroke="#1b1b1b" /></svg>
        <div className="mb-[4px] ml-[18px] w-[72px] whitespace-nowrap text-right text-[14.700px] leading-[20px] tracking-[-0.300px]"><div>9:06 PM</div><div>9/16/2024</div></div>
        <Bell className="ml-[9px] h-[19px] w-[19px]" strokeWidth={1.500} />
        <div className="relative ml-[22px] mr-[25px] h-[29px] w-[29px]">
          <svg viewBox="0 0 29 29" className="h-[29px] w-[29px]"><defs><linearGradient id="ca" x1="0" y1="0" x2="0" y2="1"><stop offset="0" stopColor="#189fe8" /><stop offset=".6" stopColor="#5fc05a" /><stop offset="1" stopColor="#f0c020" /></linearGradient><linearGradient id="cb" x1="0" y1="0" x2="0" y2="1"><stop offset="0" stopColor="#a45cf0" /><stop offset="1" stopColor="#f0607a" /></linearGradient></defs><path d="M6 1h12l-6 15q-1 4-5 4H4q-4 0-3-5L3 4q1-3 3-3z" fill="url(#ca)" /><path d="M14 1h4q3 0 4 6h-6z" fill="#1b4fd8" /><path d="M20 8h5q4 0 3 4l-3 9q-1 3-4 3h-9q3 0 4-5z" fill="url(#cb)" /></svg>
          <span className="absolute -bottom-px left-[7px] flex h-[10px] w-[22px] items-center justify-center rounded-[2px] bg-[#fbbc04] text-[8px] font-bold">PRE</span>
        </div>
      </div>
    </div>
  );
}

export default function App() {
  return (
    <div className="h-[1080px] w-[1920px] overflow-hidden font-[Noto_Sans,sans-serif]">
      <TabStrip />
      <Toolbar />
      <Meet />
      <Taskbar />
    </div>
  );
}
